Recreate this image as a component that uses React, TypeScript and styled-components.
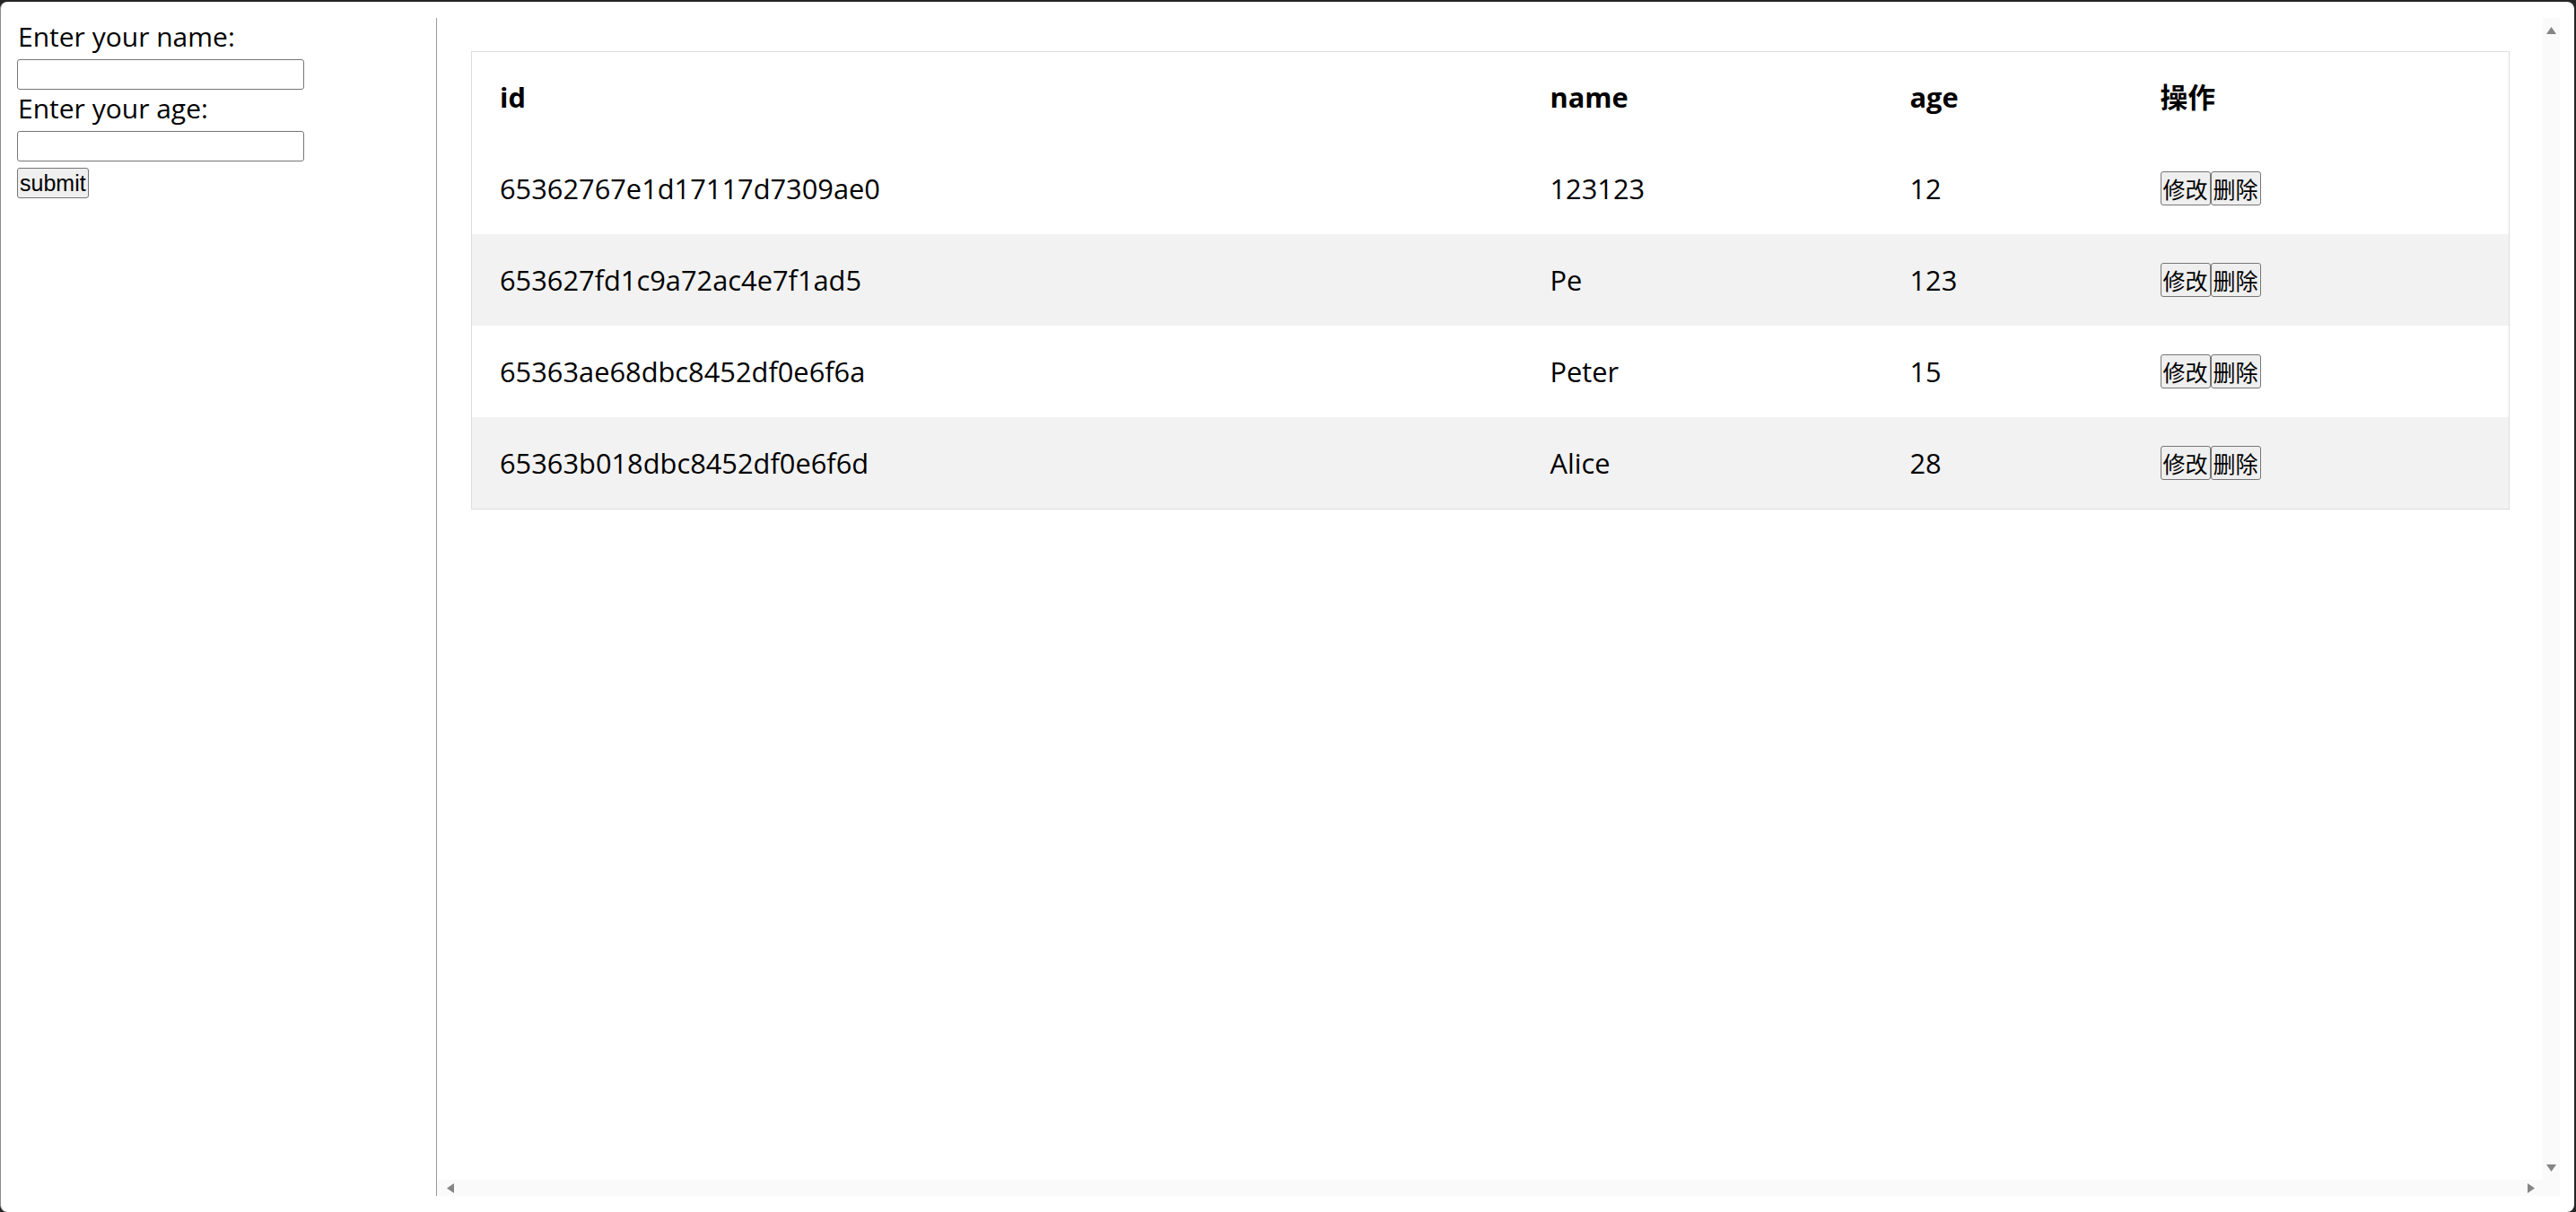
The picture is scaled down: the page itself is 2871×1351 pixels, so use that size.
import React from "react";
import styled, { createGlobalStyle } from "styled-components";

type Person = { _id: string; name: string; age: number };

const people: Person[] = [
  { _id: "65362767e1d17117d7309ae0", name: "123123", age: 12 },
  { _id: "653627fd1c9a72ac4e7f1ad5", name: "Pe", age: 123 },
  { _id: "65363ae68dbc8452df0e6f6a", name: "Peter", age: 15 },
  { _id: "65363b018dbc8452df0e6f6d", name: "Alice", age: 28 },
];

const GlobalStyle = createGlobalStyle`
  html, body {
    margin: 0;
    padding: 0;
    background: #252525;
  }
  body {
    font-family: "Open Sans", "Noto Sans", "Noto Sans CJK SC", sans-serif;
    color: #000;
  }
`;

// small grey triangles of the scrollbar buttons
const Arrow = ({ dir }: { dir: "up" | "down" | "left" | "right" }) => {
  const vertical = dir === "up" || dir === "down";
  const points = {
    up: "0,8 5.5,0 11,8",
    down: "0,0 11,0 5.5,8",
    left: "8,0 8,11 0,5.5",
    right: "0,0 8,5.5 0,11",
  }[dir];
  return (
    <svg width={vertical ? 11 : 8} height={vertical ? 8 : 11} viewBox={vertical ? "0 0 11 8" : "0 0 8 11"}>
      <polygon points={points} fill="#858585" />
    </svg>
  );
};

export default function App() {
  return (
    <>
      <GlobalStyle />
      <Window>
        <Layout>
          <FormPanel>
            <Label>Enter your name:</Label>
            <TextInput type="text" />
            <Label>Enter your age:</Label>
            <TextInput type="text" />
            <SubmitButton>submit</SubmitButton>
          </FormPanel>

          <TablePanel>
            <ScrollView>
              <Table>
                <colgroup>
                  <col style={{ width: 1171 }} />
                  <col style={{ width: 401 }} />
                  <col style={{ width: 279 }} />
                  <col />
                </colgroup>
                <thead>
                  <tr>
                    <Th>id</Th>
                    <Th>name</Th>
                    <Th>age</Th>
                    <Th>操作</Th>
                  </tr>
                </thead>
                <tbody>
                  {people.map((p) => (
                    <Row key={p._id}>
                      <Td>{p._id}</Td>
                      <Td>{p.name}</Td>
                      <Td>{p.age}</Td>
                      <Td>
                        <Actions>
                          <ActionButton>修改</ActionButton>
                          <ActionButton>删除</ActionButton>
                        </Actions>
                      </Td>
                    </Row>
                  ))}
                </tbody>
              </Table>
            </ScrollView>

            <VScrollbar>
              <Arrow dir="up" />
              <Arrow dir="down" />
            </VScrollbar>
            <HScrollbar>
              <Arrow dir="left" />
              <Arrow dir="right" />
            </HScrollbar>
            <ScrollCorner />
          </TablePanel>
        </Layout>
      </Window>
    </>
  );
}

const Window = styled.div`
  margin: 2px 2px 0 0;
  height: 1349px;
  box-sizing: border-box;
  background: #fff;
  border-radius: 8px;
  border-left: 1px solid #8c8c8c;
  overflow: hidden;
`;

const Layout = styled.div`
  display: flex;
  height: 100%;
  box-sizing: border-box;
  padding: 18px 16px 18px 18px;
`;

const FormPanel = styled.div`
  width: 467px;
  flex-shrink: 0;
  display: flex;
  flex-direction: column;
  align-items: flex-start;
`;

const Label = styled.div`
  font-size: 30px;
  line-height: 42px;
  margin-bottom: 4px;
  padding-left: 1px;
`;

const TextInput = styled.input`
  width: 320px;
  height: 34px;
  box-sizing: border-box;
  margin: 0;
  border: 1px solid #767676;
  border-radius: 3px;
  background: #fff;
`;

const SubmitButton = styled.button`
  margin-top: 7px;
  height: 34px;
  padding: 0 2px;
  font-family: "Liberation Sans", Arial, sans-serif;
  font-size: 25px;
  color: #000;
  background: #efefef;
  border: 1px solid #767676;
  border-radius: 3px;
`;

const TablePanel = styled.div`
  flex: 1;
  min-width: 0;
  border-left: 1px solid #9a9a9a;
  display: grid;
  grid-template-columns: 1fr 19px;
  grid-template-rows: 1fr 18px;
`;

const ScrollView = styled.div`
  min-width: 0;
  min-height: 0;
  overflow: hidden;
  padding: 37px 37px 37px 38px;
`;

const VScrollbar = styled.div`
  background: #fafafa;
  display: flex;
  flex-direction: column;
  align-items: center;
  justify-content: space-between;
  padding: 10px 0 9px;
`;

const HScrollbar = styled.div`
  background: #fafafa;
  display: flex;
  align-items: center;
  justify-content: space-between;
  padding: 0 9px 0 11px;
`;

const ScrollCorner = styled.div`
  background: #fafafa;
`;

const Table = styled.table`
  width: 100%;
  border-collapse: collapse;
  table-layout: fixed;
  border: 1px solid #ddd;
  font-size: 30.8px;
  line-height: 40px;
`;

const Th = styled.th`
  padding: 30px 31px 31px;
  text-align: left;
  font-weight: 700;
  white-space: nowrap;
`;

const Row = styled.tr`
  &:nth-child(even) {
    background: #f2f2f2;
  }
`;

const Td = styled.td`
  padding: 31px;
  height: 40px;
  white-space: nowrap;
  vertical-align: middle;
`;

const Actions = styled.div`
  display: flex;
  align-items: center;
  height: 40px;
`;

const ActionButton = styled.button`
  height: 38px;
  margin: 0;
  padding: 0 2px;
  font-family: "Noto Sans CJK SC", sans-serif;
  font-size: 25px;
  line-height: 34px;
  color: #000;
  background: #efefef;
  border: 1px solid #767676;
  border-radius: 3px;
`;
